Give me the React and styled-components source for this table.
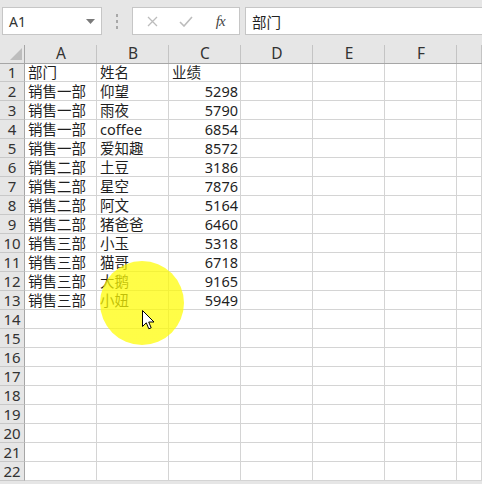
import React from 'react';
import styled, { createGlobalStyle } from 'styled-components';

const GlobalStyle = createGlobalStyle`
  html, body {
    margin: 0;
    padding: 0;
    background: #e6e6e6;
    overflow: hidden;
  }
  body {
    font-family: "Noto Sans", "Noto Sans CJK SC", sans-serif;
  }
`;

const Page = styled.div`
  position: relative;
  width: 482px;
  height: 484px;
  overflow: hidden;
  background: #e6e6e6;
`;

const Toolbar = styled.div`
  display: flex;
  align-items: flex-start;
  height: 44px;
  padding: 7px 0 0 2px;
  box-sizing: border-box;
`;

const Field = styled.div`
  display: flex;
  align-items: center;
  box-sizing: border-box;
  height: 28px;
  width: ${(p) => p.$width};
  background: #fff;
  border: 1px solid #c6c6c6;
  ${(p) => (p.$open ? 'border-right: none;' : '')}
  padding: 0 ${(p) => p.$pad || '6px'};
  font-size: 14px;
  color: #333;
`;

const NameText = styled.span`
  flex: 1;
  font-family: "Noto Sans", sans-serif;
  font-size: 14px;
`;

const Dots = styled.div`
  width: 31px;
  display: flex;
  flex-direction: column;
  align-items: center;
  gap: 3px;
  padding-top: 7px;

  span {
    width: 2px;
    height: 3px;
    background: #a8a8a8;
  }
`;

const IconSlot = styled.div`
  flex: 1;
  display: flex;
  justify-content: center;
  align-items: center;
`;

const Fx = styled.span`
  font-family: "Liberation Serif", serif;
  font-style: italic;
  font-size: 15px;
  color: #444;
  letter-spacing: -1px;
`;

const Gap = styled.div`
  width: 5px;
`;

const FormulaText = styled.span`
  padding-left: 6px;
  font-family: "Noto Sans CJK SC", sans-serif;
  font-size: 14.5px;
  color: #222;
`;

const Sheet = styled.div`
  display: grid;
  grid-template-columns: 25px repeat(6, 72px) 1fr;
  grid-auto-rows: 19px;
`;

const ColHead = styled.div`
  box-sizing: border-box;
  height: 20px;
  border-bottom: 1px solid #a6a6a6;
  display: flex;
  align-items: center;
  justify-content: center;
  position: relative;
  font-size: 15.5px;
  line-height: 19px;
  color: #333;
  font-family: "Noto Sans", sans-serif;

  &::after {
    content: '';
    position: absolute;
    right: 0;
    top: 1px;
    bottom: 0;
    width: 1px;
    background: ${(p) => (p.$corner ? '#a6a6a6' : '#c4c4c4')};
  }
`;

const Corner = styled.span`
  position: absolute;
  right: 3px;
  bottom: 3px;
  width: 0;
  height: 0;
  border-left: 12px solid transparent;
  border-bottom: 12px solid #bdbdbd;
`;

const RowHead = styled.div`
  box-sizing: border-box;
  border-right: 1px solid #a6a6a6;
  border-bottom: 1px solid #c8c8c8;
  display: flex;
  align-items: center;
  justify-content: center;
  font-size: 15px;
  color: #333;
  font-family: "Noto Sans", sans-serif;
  line-height: 18px;
`;

const Cell = styled.div`
  box-sizing: border-box;
  background: #fff;
  border-right: 1px solid #d4d4d4;
  border-bottom: 1px solid #d4d4d4;
  padding: 0 ${(p) => (p.$num ? '2px' : '3px')};
  text-align: ${(p) => (p.$num ? 'right' : 'left')};
  font-family: "Noto Sans", "Noto Sans CJK SC", sans-serif;
  font-size: 14.5px;
  line-height: 18px;
  color: #1f1f1f;
  white-space: nowrap;
  overflow: hidden;
`;

const Spot = styled.div`
  position: absolute;
  left: 100px;
  top: 261px;
  width: 84px;
  height: 84px;
  border-radius: 50%;
  background: radial-gradient(
    circle,
    rgba(255, 252, 0, 0.72) 0%,
    rgba(255, 252, 0, 0.72) 76%,
    rgba(255, 252, 0, 0.38) 89%,
    rgba(255, 252, 0, 0) 100%
  );
  pointer-events: none;
`;

const Cursor = styled.svg`
  position: absolute;
  left: 142px;
  top: 310px;
`;

const data = [
  ['部门', '姓名', '业绩'],
  ['销售一部', '仰望', 5298],
  ['销售一部', '雨夜', 5790],
  ['销售一部', 'coffee', 6854],
  ['销售一部', '爱知趣', 8572],
  ['销售二部', '土豆', 3186],
  ['销售二部', '星空', 7876],
  ['销售二部', '阿文', 5164],
  ['销售二部', '猪爸爸', 6460],
  ['销售三部', '小玉', 5318],
  ['销售三部', '猫哥', 6718],
  ['销售三部', '大鹅', 9165],
  ['销售三部', '小妞', 5949],
];

const cols = ['A', 'B', 'C', 'D', 'E', 'F', ''];

export default function App() {
  const rows = [];
  for (let r = 0; r < 22; r++) {
    const vals = data[r] || [];
    rows.push(
      <React.Fragment key={r}>
        <RowHead>{r + 1}</RowHead>
        {cols.map((c, i) => {
          const v = vals[i];
          return (
            <Cell key={c + i} $num={typeof v === 'number'}>
              {v}
            </Cell>
          );
        })}
      </React.Fragment>
    );
  }

  return (
    <Page>
      <GlobalStyle />
      <Toolbar>
        <Field $width="101px" $pad="6px">
          <NameText>A1</NameText>
          <svg width="9" height="5" viewBox="0 0 9 5">
            <path d="M0 0 L9 0 L4.5 5 Z" fill="#7a7a7a" />
          </svg>
        </Field>
        <Dots>
          <span />
          <span />
          <span />
        </Dots>
        <Field $width="109px" $pad="2px">
          <IconSlot>
            <svg width="11" height="11" viewBox="0 0 11 11">
              <path d="M1 1 L10 10 M10 1 L1 10" stroke="#bcbcbc" strokeWidth="1.3" />
            </svg>
          </IconSlot>
          <IconSlot>
            <svg width="14" height="11" viewBox="0 0 14 11">
              <path d="M1 6 L5 10 L13 1" stroke="#bcbcbc" strokeWidth="1.6" fill="none" />
            </svg>
          </IconSlot>
          <IconSlot>
            <Fx>fx</Fx>
          </IconSlot>
        </Field>
        <Gap />
        <Field $width="240px" $open $pad="0">
          <FormulaText>部门</FormulaText>
        </Field>
      </Toolbar>
      <Sheet>
        <ColHead $corner>
          <Corner />
        </ColHead>
        {cols.map((c, i) => (
          <ColHead key={c + i}>{c}</ColHead>
        ))}
        {rows}
      </Sheet>
      <Spot />
      <Cursor width="13" height="21" viewBox="0 0 13 21">
        <path
          d="M0.5 0.5 L0.5 16.5 L4.3 12.8 L6.8 18.8 L9.2 17.8 L6.7 12 L12 12 Z"
          fill="#fff"
          stroke="#000"
          strokeWidth="1"
          strokeLinejoin="miter"
        />
      </Cursor>
    </Page>
  );
}
